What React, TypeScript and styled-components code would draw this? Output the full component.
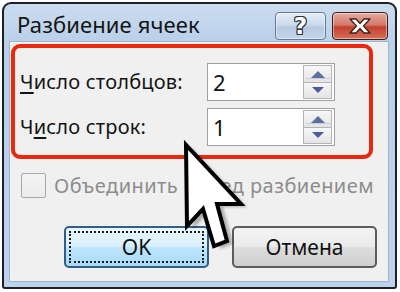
import { Fragment } from 'react'
import styled, { createGlobalStyle } from 'styled-components'

const GlobalStyle = createGlobalStyle`
  html, body { margin: 0; padding: 0; background: #fff; }
  body { font-family: 'Noto Sans', 'Open Sans', sans-serif; color: #111; }
`

const Page = styled.div`
  position: relative;
  width: 400px;
  height: 292px;
  padding: 2px 0 0 2px;
  box-sizing: border-box;
  overflow: hidden;
`

const Window = styled.div`
  width: 395px;
  height: 287px;
  box-sizing: border-box;
  border: 2px solid #1d2125;
  border-radius: 9px 9px 3px 3px;
  background: linear-gradient(#cbdcef, #b9d0e9 38px, #bdd3eb);
  padding: 0 6px 5px 5px;
  display: flex;
  flex-direction: column;
`

const TitleBar = styled.div`
  height: 37px;
  display: flex;
  align-items: flex-start;
  justify-content: space-between;
  flex-shrink: 0;
`

const Title = styled.div`
  font-size: 22px;
  line-height: 26px;
  letter-spacing: 0.1px;
  padding: 7px 0 0 8px;
  color: #141414;
`

const CaptionButtons = styled.div`
  display: flex;
  gap: 6px;
  margin: 8px 1px 0 0;
`

const CaptionButton = styled.div<{ $close?: boolean }>`
  width: ${p => (p.$close ? 56 : 51)}px;
  height: 28px;
  box-sizing: border-box;
  border: 1px solid ${p => (p.$close ? '#3a1c18' : '#61799a')};
  border-radius: 4px;
  display: flex;
  align-items: center;
  justify-content: center;
  background: ${p =>
    p.$close
      ? 'linear-gradient(#e6aa9f, #d5796a 45%, #c2412f 55%, #d8705a)'
      : 'linear-gradient(#e6edf6, #cbdaea 45%, #b5c9e0 55%, #c5d6ea)'};
  box-shadow: inset 0 0 0 1px rgba(255, 255, 255, 0.45);
`

const HelpGlyph = styled.span`
  font-family: 'DejaVu Sans', sans-serif;
  font-weight: bold;
  font-size: 23px;
  line-height: 1;
  color: #fff;
  text-shadow:
    1px 0 0 #2b3440, -1px 0 0 #2b3440, 0 1px 0 #2b3440, 0 -1px 0 #2b3440,
    1px 1px 0 #2b3440, -1px -1px 0 #2b3440, 1px -1px 0 #2b3440, -1px 1px 0 #2b3440;
`

const Client = styled.div`
  flex: 1;
  background: #f0f0f0;
  border: 1px solid #9fb5cf;
  padding: 2px 0 0 1px;
  display: flex;
  flex-direction: column;
`

const Highlight = styled.div`
  width: 362px;
  height: 115px;
  box-sizing: border-box;
  border: 4px solid #e9280e;
  border-radius: 9px;
  padding: 15px 0 0 5px;
  display: grid;
  grid-template-columns: 187px 128px;
  grid-auto-rows: 38px;
  row-gap: 7px;
  align-items: center;
`

const Label = styled.div`
  font-size: 20px;
  line-height: 24px;
  letter-spacing: 0.2px;
  color: #141414;

  u {
    text-decoration-thickness: 2px;
    text-underline-offset: 3px;
  }
`

const SpinBox = styled.div`
  height: 38px;
  box-sizing: border-box;
  border: 1px solid #a0a0a0;
  background: #fff;
  display: flex;
  align-items: center;
  justify-content: space-between;
  padding: 1px 2px 1px 5px;
`

const SpinValue = styled.span`
  font-size: 22px;
  color: #111;
`

const SpinButtons = styled.div`
  width: 29px;
  align-self: stretch;
  display: flex;
  flex-direction: column;
`

const SpinButton = styled.div`
  flex: 1;
  border: 1px solid #b4b4b4;
  background: linear-gradient(#f7f7f7, #e4e4e4);
  display: flex;
  align-items: center;
  justify-content: center;

  & + & {
    border-top: none;
  }
`

const CheckRow = styled.div`
  display: flex;
  align-items: center;
  gap: 8px;
  margin: 13px 0 0 10px;
`

const CheckBox = styled.div`
  width: 25px;
  height: 25px;
  box-sizing: border-box;
  border: 1px solid #a8a8a8;
  border-radius: 2px;
  background: linear-gradient(#f4f4f4, #ececec);
`

const CheckText = styled.span`
  font-size: 20px;
  letter-spacing: 0.45px;
  color: #8c8c8c;
`

const ButtonRow = styled.div`
  display: flex;
  gap: 23px;
  margin: 27px 0 0 53px;
`

const Button = styled.div<{ $default?: boolean }>`
  position: relative;
  width: 145px;
  height: 42px;
  box-sizing: border-box;
  border: 2px solid ${p => (p.$default ? '#2f5f86' : '#5c5c5c')};
  border-radius: 5px;
  background: ${p =>
    p.$default
      ? 'linear-gradient(#eaf6fd, #d9f0fc 48%, #bee6fd 52%, #a7d9f5)'
      : 'linear-gradient(#f3f3f3, #ebebeb 48%, #dddddd 52%, #cfcfcf)'};
  display: flex;
  align-items: center;
  justify-content: center;
  font-size: 21px;
  color: #111;
`

const FocusRect = styled.div`
  position: absolute;
  inset: 3px;
  border: 2px dotted #1b1b1b;
`

const CursorLayer = styled.svg`
  position: absolute;
  left: 0;
  top: 0;
  pointer-events: none;
`

const ArrowUp = () => (
  <svg width="26" height="12" viewBox="0 0 26 12">
    <line x1="1" y1="10.5" x2="25" y2="10.5" stroke="#c9ccd6" strokeWidth="1" />
    <polygon points="13,3 20,10 6,10" fill="#5b6fa0" />
  </svg>
)

const ArrowDown = () => (
  <svg width="26" height="10" viewBox="0 0 26 10">
    <polygon points="7,2 19,2 13,8" fill="#4a5d99" />
  </svg>
)

const CloseIcon = () => (
  <svg width="26" height="18" viewBox="0 0 26 18">
    <polygon
      points="3,2 9,2 13,6.5 17,2 23,2 16.5,9 23,16 17,16 13,11.5 9,16 3,16 9.5,9"
      fill="#fff"
      stroke="#3b2420"
      strokeWidth="1.3"
      strokeLinejoin="round"
    />
  </svg>
)

const rows = [
  { before: '', key: 'Ч', after: 'исло столбцов:', value: '2' },
  { before: 'Ч', key: 'и', after: 'сло строк:', value: '1' }
]

const cursor = '186,145 187,226 203,209 214,246 227,241 217,204 241,204'

export default function App () {
  return (
    <Page>
      <GlobalStyle />
      <Window>
        <TitleBar>
          <Title>Разбиение ячеек</Title>
          <CaptionButtons>
            <CaptionButton><HelpGlyph>?</HelpGlyph></CaptionButton>
            <CaptionButton $close><CloseIcon /></CaptionButton>
          </CaptionButtons>
        </TitleBar>
        <Client>
          <Highlight>
            {rows.map(r => (
              <Fragment key={r.value}>
                <Label>{r.before}<u>{r.key}</u>{r.after}</Label>
                <SpinBox>
                  <SpinValue>{r.value}</SpinValue>
                  <SpinButtons>
                    <SpinButton><ArrowUp /></SpinButton>
                    <SpinButton><ArrowDown /></SpinButton>
                  </SpinButtons>
                </SpinBox>
              </Fragment>
            ))}
          </Highlight>
          <CheckRow>
            <CheckBox />
            <CheckText>Объединить перед разбиением</CheckText>
          </CheckRow>
          <ButtonRow>
            <Button $default><FocusRect />OK</Button>
            <Button>Отмена</Button>
          </ButtonRow>
        </Client>
      </Window>
      <CursorLayer width="400" height="292" viewBox="0 0 400 292">
        <defs>
          <filter id="soft" x="-20%" y="-20%" width="140%" height="140%">
            <feGaussianBlur stdDeviation="1.5" />
          </filter>
        </defs>
        <polygon points={cursor} transform="translate(6 3)" fill="rgba(0,0,0,0.28)" filter="url(#soft)" />
        <polygon points={cursor} fill="#fff" stroke="#000" strokeWidth="4" strokeLinejoin="miter" />
      </CursorLayer>
    </Page>
  )
}
